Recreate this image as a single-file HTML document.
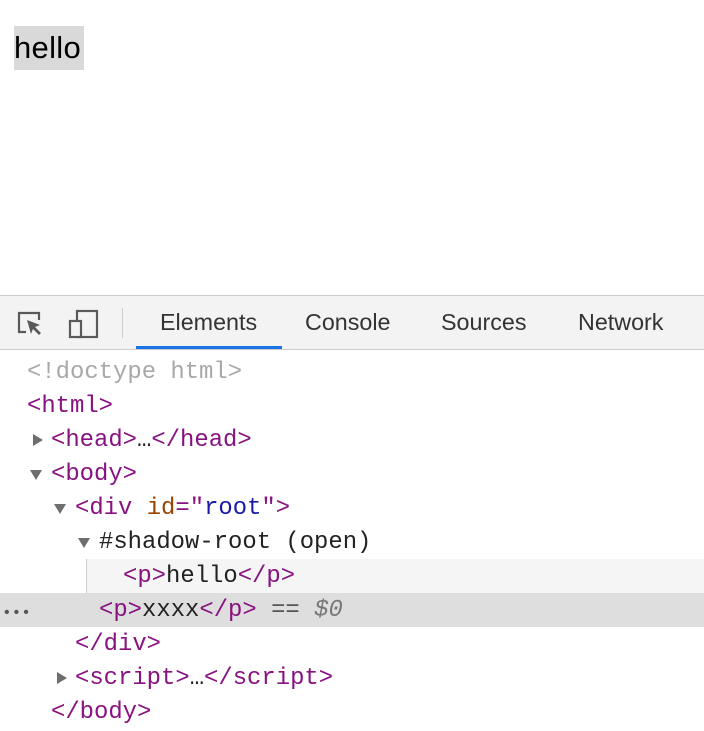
<!DOCTYPE html>
<html><head><style>
body{margin:0;width:704px;height:706px;overflow:hidden;background:#fff;position:relative;font-family:"Liberation Sans",sans-serif}
.hl{position:absolute;left:14px;top:26px;width:70px;height:44px;background:#d9d9d9;font-size:31px;line-height:44px;color:#000;letter-spacing:0.3px}
.tb{position:absolute;left:0;top:295px;width:704px;height:53px;background:#f3f3f3;border-top:1px solid #cbcbcb;border-bottom:1px solid #cbcbcb}
.tab{position:absolute;top:0;height:53px;line-height:53px;font-size:23.3px;color:#333}
.ul{position:absolute;left:136px;top:50px;width:146px;height:3px;background:#1a73e8}
.sep{position:absolute;left:122px;top:12px;width:1px;height:30px;background:#ccc}
.ln{position:absolute;left:0;width:704px;height:34px;line-height:36px;font-family:"Liberation Mono",monospace;font-size:23.9px;white-space:pre;color:#222}
.t{color:#881280}.a{color:#994500}.v{color:#1a1aa6}.g{color:#aaa}.d{color:#a8a8a8}
.tri{position:absolute;width:0;height:0}
.r{border-top:6px solid transparent;border-bottom:6px solid transparent;border-left:10px solid #6e6e6e;top:11px}
.dn{border-left:6px solid transparent;border-right:6px solid transparent;border-top:10px solid #6e6e6e;top:13px}
</style></head><body>
<div class="hl">hello</div>
<div class="tb">
<svg style="position:absolute;left:16px;top:14px" width="30" height="28" viewBox="0 0 30 28"><path d="M10 22H3V3h20v7" fill="none" stroke="#5a5a5a" stroke-width="2.2"/><path d="M11 10l13 5-5 2 6 6-2 2-6-6-2 5z" fill="#5a5a5a"/></svg>
<svg style="position:absolute;left:68px;top:12px" width="32" height="32" viewBox="0 0 32 32"><rect x="9" y="3" width="20" height="26" fill="none" stroke="#5a5a5a" stroke-width="2.2"/><rect x="2" y="13" width="11" height="16" fill="#f3f3f3" stroke="#5a5a5a" stroke-width="2.2"/></svg>
<div class="sep"></div>
<div class="tab" style="left:160px">Elements</div>
<div class="tab" style="left:305px">Console</div>
<div class="tab" style="left:441px">Sources</div>
<div class="tab" style="left:578px">Network</div>
<div class="ul"></div>
</div>
<div class="ln" style="top:355px"><span style="padding-left:27px" class="d">&lt;!doctype html&gt;</span></div>
<div class="ln" style="top:389px"><span style="padding-left:27px" class="t">&lt;html&gt;</span></div>
<div class="ln" style="top:423px"><i class="tri r" style="left:33px"></i><span style="padding-left:51px"><span class="t">&lt;head&gt;</span>…<span class="t">&lt;/head&gt;</span></span></div>
<div class="ln" style="top:457px"><i class="tri dn" style="left:30px"></i><span style="padding-left:51px" class="t">&lt;body&gt;</span></div>
<div class="ln" style="top:491px"><i class="tri dn" style="left:54px"></i><span style="padding-left:75px"><span class="t">&lt;div </span><span class="a">id</span><span class="t">="</span><span class="v">root</span><span class="t">"&gt;</span></span></div>
<div class="ln" style="top:525px"><i class="tri dn" style="left:78px"></i><span style="padding-left:99px">#shadow-root (open)</span></div>
<div class="ln" style="top:559px;background:#f5f5f5;left:86px;width:618px"><div style="position:absolute;left:0;top:0;width:1px;height:34px;background:#ccc"></div><span style="padding-left:37px"><span class="t">&lt;p&gt;</span>hello<span class="t">&lt;/p&gt;</span></span></div>
<div class="ln" style="top:593px;background:#dedede"><span style="position:absolute;left:2px;top:2px;color:#555;font-size:16px">•••</span><span style="padding-left:99px"><span class="t">&lt;p&gt;</span>xxxx<span class="t">&lt;/p&gt;</span> <span style="color:#555">==</span> <i style="color:#777">$0</i></span></div>
<div class="ln" style="top:627px"><span style="padding-left:75px" class="t">&lt;/div&gt;</span></div>
<div class="ln" style="top:661px"><i class="tri r" style="left:57px"></i><span style="padding-left:75px"><span class="t">&lt;script&gt;</span>…<span class="t">&lt;/script&gt;</span></span></div>
<div class="ln" style="top:695px"><span style="padding-left:51px" class="t">&lt;/body&gt;</span></div>
</body></html>
